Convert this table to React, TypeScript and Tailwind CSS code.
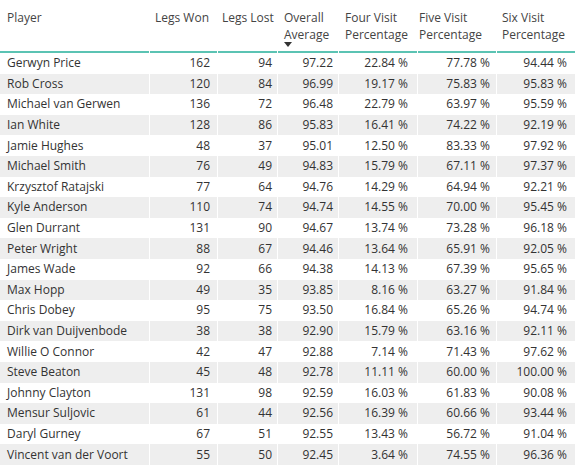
const rows: [string, number, number, string, string, string, string][] = [
  ["Gerwyn Price", 162, 94, "97.22", "22.84 %", "77.78 %", "94.44 %"],
  ["Rob Cross", 120, 84, "96.99", "19.17 %", "75.83 %", "95.83 %"],
  ["Michael van Gerwen", 136, 72, "96.48", "22.79 %", "63.97 %", "95.59 %"],
  ["Ian White", 128, 86, "95.83", "16.41 %", "74.22 %", "92.19 %"],
  ["Jamie Hughes", 48, 37, "95.01", "12.50 %", "83.33 %", "97.92 %"],
  ["Michael Smith", 76, 49, "94.83", "15.79 %", "67.11 %", "97.37 %"],
  ["Krzysztof Ratajski", 77, 64, "94.76", "14.29 %", "64.94 %", "92.21 %"],
  ["Kyle Anderson", 110, 74, "94.74", "14.55 %", "70.00 %", "95.45 %"],
  ["Glen Durrant", 131, 90, "94.67", "13.74 %", "73.28 %", "96.18 %"],
  ["Peter Wright", 88, 67, "94.46", "13.64 %", "65.91 %", "92.05 %"],
  ["James Wade", 92, 66, "94.38", "14.13 %", "67.39 %", "95.65 %"],
  ["Max Hopp", 49, 35, "93.85", "8.16 %", "63.27 %", "91.84 %"],
  ["Chris Dobey", 95, 75, "93.50", "16.84 %", "65.26 %", "94.74 %"],
  ["Dirk van Duijvenbode", 38, 38, "92.90", "15.79 %", "63.16 %", "92.11 %"],
  ["Willie O Connor", 42, 47, "92.88", "7.14 %", "71.43 %", "97.62 %"],
  ["Steve Beaton", 45, 48, "92.78", "11.11 %", "60.00 %", "100.00 %"],
  ["Johnny Clayton", 131, 98, "92.59", "16.03 %", "61.83 %", "90.08 %"],
  ["Mensur Suljovic", 61, 44, "92.56", "16.39 %", "60.66 %", "93.44 %"],
  ["Daryl Gurney", 67, 51, "92.55", "13.43 %", "56.72 %", "91.04 %"],
  ["Vincent van der Voort", 55, 50, "92.45", "3.64 %", "74.55 %", "96.36 %"],
];

const cols = [
  { w: "w-[149px]", head: "pl-[7px]", cell: "pl-[7px] text-left" },
  { w: "w-[67px]", head: "pl-[5px]", cell: "pr-[7px] text-right" },
  { w: "w-[59px]", head: "pl-[4px]", cell: "pr-[5px] text-right" },
  { w: "w-[60px]", head: "pl-[6px]", cell: "pr-[5px] text-right" },
  { w: "w-[78px]", head: "pl-[6px]", cell: "pr-[9px] text-right" },
  { w: "w-[78px]", head: "pl-[1px]", cell: "pr-[6px] text-right" },
  { w: "w-[78px]", head: "pl-[5px]", cell: "pr-[8px] text-right" },
];

const headers = [
  ["Player"],
  ["Legs Won"],
  ["Legs Lost"],
  ["Overall", "Average"],
  ["Four Visit", "Percentage"],
  ["Five Visit", "Percentage"],
  ["Six Visit", "Percentage"],
];

export default function App() {
  return (
    <div className="w-[575px] h-[466px] bg-white overflow-hidden text-[12px] leading-[16px] text-[#333]" style={{ fontFamily: '"Open Sans", sans-serif' }}>
      <div className="flex gap-px h-[53px]">
        {headers.map((h, i) => (
          <div key={i} className={`${cols[i].w} ${cols[i].head} shrink-0 border-b-2 border-[#5bc3b3] pt-[10px] text-[#444] relative`}>
            {h.map((line) => (
              <div key={line} className="whitespace-nowrap h-[17px]">{line}</div>
            ))}
            {i === 3 && (
              <svg className="absolute left-[6px] top-[42px]" width="8" height="5" viewBox="0 0 8 5">
                <path d="M0 0h8L4 5z" fill="#333" />
              </svg>
            )}
          </div>
        ))}
      </div>
      {rows.map((r, ri) => (
        <div key={ri} className="flex gap-px h-[20.6px]">
          {r.map((v, ci) => (
            <div
              key={ci}
              className={`${cols[ci].w} ${cols[ci].cell} shrink-0 whitespace-nowrap flex items-center ${ci === 0 ? "justify-start" : "justify-end"} ${ri % 2 === 1 ? "bg-[#eeeeee]" : "bg-white"}`}
            >
              {v}
            </div>
          ))}
        </div>
      ))}
    </div>
  );
}
